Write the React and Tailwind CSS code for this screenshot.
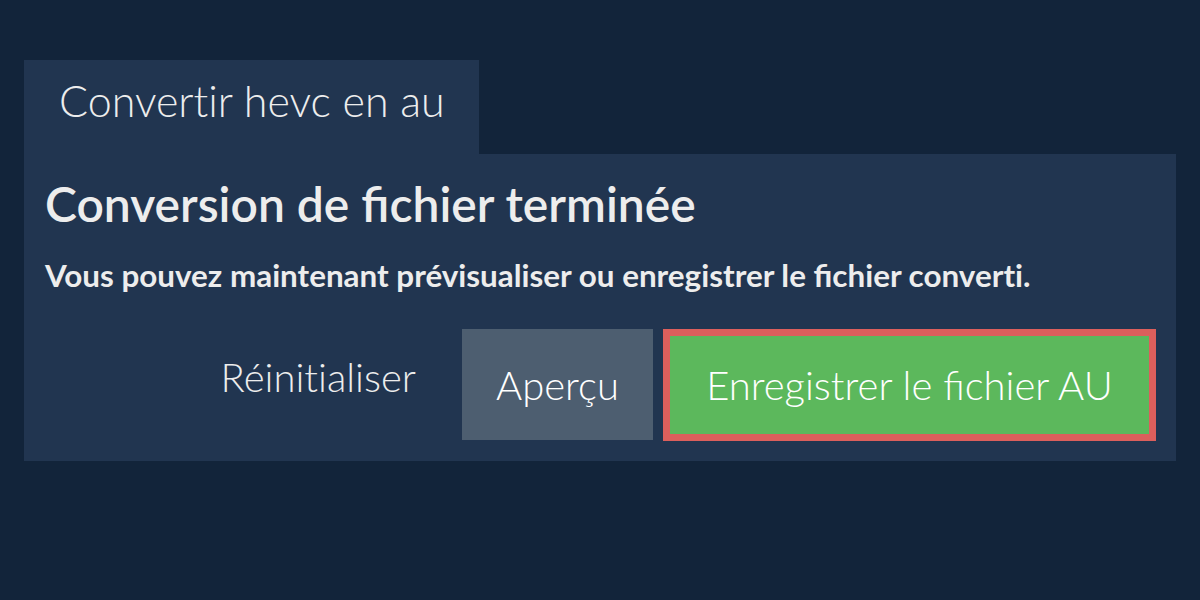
export default function App() {
  return (
    <div
      className="min-h-[600px] w-[1200px] bg-[#12243a] px-6 pt-[60px] text-[#ededed]"
      style={{ fontFamily: 'Lato, "Noto Sans", sans-serif' }}
    >
      <div className="h-[94px] w-[455px] bg-[#213550] pl-[35px] pt-[15px]">
        <span className="block text-[43px] font-light leading-[52px]">{'Convert\u200Cir hevc en au'}</span>
      </div>
      <div className="bg-[#213550] pb-[20px] pl-[21px] pr-[20px] pt-[21px]">
        <h1 className="text-[48px] font-semibold leading-[58px]">Conversion de fichier terminée</h1>
        <p className="mt-[24px] text-[31.4px] font-bold leading-[36px]">
          {'Vous pouvez maintenant prévisualiser ou enregistrer le fichier convert\u200Ci.'}
        </p>
        <div className="mt-[36px] flex items-stretch justify-end gap-[10px]">
          <button className="px-[36px] pb-[16px] text-[40px] font-light leading-[48px] text-[#ededed]">
            {'Réinit\u200Cialiser'}
          </button>
          <button className="h-[111px] w-[191px] bg-[#4d5e70] text-[40px] font-light leading-[48px] text-white">Aperçu</button>
          <button className="h-[112px] w-[493px] border-[7px] border-[#dc5f5c] bg-[#5cb85c] text-[40px] font-light leading-[48px] text-white">
            Enregistrer le fichier AU
          </button>
        </div>
      </div>
    </div>
  );
}
